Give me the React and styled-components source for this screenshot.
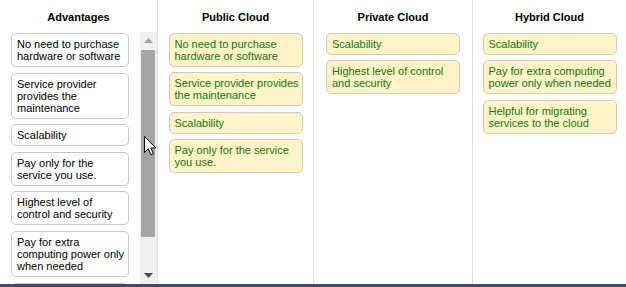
import styled, { createGlobalStyle } from 'styled-components';

const GlobalStyle = createGlobalStyle`
  html, body {
    margin: 0;
    padding: 0;
    background: #ffffff;
  }
  body {
    font-family: "Liberation Sans", Arial, sans-serif;
    font-size: 11px;
  }
`;

const columns = [
  {
    title: 'Advantages',
    width: 157,
    scroll: true,
    items: [
      'No need to purchase hardware or software',
      'Service provider provides the maintenance',
      'Scalability',
      'Pay only for the service you use.',
      'Highest level of control and security',
      'Pay for extra computing power only when needed',
      'Helpful for migrating services to the cloud',
    ],
  },
  {
    title: 'Public Cloud',
    width: 155,
    items: [
      'No need to purchase hardware or software',
      'Service provider provides the maintenance',
      'Scalability',
      'Pay only for the service you use.',
    ],
  },
  {
    title: 'Private Cloud',
    width: 158,
    items: ['Scalability', 'Highest level of control and security'],
  },
  {
    title: 'Hybrid Cloud',
    items: [
      'Scalability',
      'Pay for extra computing power only when needed',
      'Helpful for migrating services to the cloud',
    ],
  },
];

const App = () => {
  return (
    <>
      <GlobalStyle />
      <Page>
        <Board>
          {columns.map((col, i) => (
            <Column key={col.title} $width={col.width} $last={i === columns.length - 1}>
              <Header>{col.title}</Header>
              {col.scroll ? (
                <ScrollArea>
                  <List $source>
                    {col.items.map((item) => (
                      <Card key={item} $source>{item}</Card>
                    ))}
                  </List>
                  <Scrollbar>
                    <ArrowButton>
                      <svg width="9" height="5" viewBox="0 0 9 5">
                        <path d="M0 5 L4.5 0 L9 5 Z" fill="#a3a3a3" />
                      </svg>
                    </ArrowButton>
                    <Track>
                      <Thumb />
                    </Track>
                    <ArrowButton>
                      <svg width="9" height="5" viewBox="0 0 9 5">
                        <path d="M0 0 L4.5 5 L9 0 Z" fill="#505050" />
                      </svg>
                    </ArrowButton>
                  </Scrollbar>
                  <Cursor width="13" height="20" viewBox="0 0 13 20">
                    <path
                      d="M0.5 0.5 L0.5 16.5 L4.3 12.8 L7 18.8 L9.4 17.8 L6.8 12 L11.8 12 Z"
                      fill="#ffffff"
                      stroke="#000000"
                      strokeWidth="1"
                      strokeLinejoin="miter"
                    />
                  </Cursor>
                </ScrollArea>
              ) : (
                <List>
                  {col.items.map((item) => (
                    <Card key={item}>{item}</Card>
                  ))}
                </List>
              )}
            </Column>
          ))}
        </Board>
        <BottomBar />
      </Page>
    </>
  );
};

const Page = styled.div`
  width: 626px;
  height: 287px;
  display: flex;
  flex-direction: column;
  overflow: hidden;
`;

const Board = styled.div`
  display: flex;
  height: 284px;
`;

const Column = styled.div`
  display: flex;
  flex-direction: column;
  width: ${(p) => (p.$width ? `${p.$width}px` : 'auto')};
  flex: ${(p) => (p.$width ? '0 0 auto' : '1 1 auto')};
  border-right: ${(p) => (p.$last ? 'none' : '1px solid #dedede')};
`;

const Header = styled.div`
  height: 32px;
  box-sizing: border-box;
  padding-top: 11px;
  line-height: 12px;
  text-align: center;
  font-weight: 700;
  font-size: 11px;
  color: #000000;
`;

const ScrollArea = styled.div`
  position: relative;
  display: flex;
  height: 252px;
`;

const List = styled.div`
  flex: 1 1 auto;
  display: flex;
  flex-direction: column;
  align-items: ${(p) => (p.$source ? 'flex-start' : 'center')};
  gap: ${(p) => (p.$source ? '5.6px' : '5.3px')};
  padding: ${(p) => (p.$source ? '1px 0 0 11px' : '1px 0 0 0')};
  overflow: hidden;
`;

const Card = styled.div`
  flex: 0 0 auto;
  box-sizing: border-box;
  width: ${(p) => (p.$source ? '118px' : '134px')};
  padding: ${(p) => (p.$source ? '4px 3px 4px 5px' : '4px 0 4px 5px')};
  border: 1px solid ${(p) => (p.$source ? '#c6c6c6' : '#cfcbb8')};
  border-radius: 5px;
  background: ${(p) => (p.$source ? '#ffffff' : '#fff3c8')};
  color: ${(p) => (p.$source ? '#000000' : '#0b7a0b')};
  font-size: 11px;
  line-height: 12px;
`;

const Scrollbar = styled.div`
  flex: 0 0 17px;
  display: flex;
  flex-direction: column;
  background: #f0f0f0;
`;

const ArrowButton = styled.div`
  flex: 0 0 17px;
  display: flex;
  align-items: center;
  justify-content: center;
`;

const Track = styled.div`
  flex: 1 1 auto;
  padding: 1px 2px 0 1px;
`;

const Thumb = styled.div`
  height: 187px;
  background: #a6a6a6;
`;

const Cursor = styled.svg`
  position: absolute;
  left: 144px;
  top: 104px;
  pointer-events: none;
`;

const BottomBar = styled.div`
  height: 3px;
  background: #47476f;
`;

export default App;
